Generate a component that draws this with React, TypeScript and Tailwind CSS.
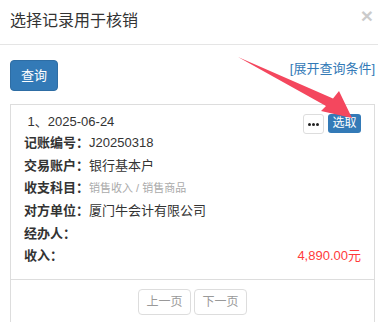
import React from "react";

const font = { fontFamily: '"Liberation Sans", "Noto Sans CJK SC", sans-serif' };

function Row({ label, children }: { label: string; children?: React.ReactNode }) {
  return (
    <div className="flex items-center h-[22.6px] text-[13px] leading-[22px] text-[#333]">
      <span className="font-bold whitespace-nowrap">{label}</span>
      <div className="flex-1 flex items-center min-w-0">{children}</div>
    </div>
  );
}

export default function App() {
  return (
    <div className="relative w-[378px] h-[322px] overflow-hidden bg-white" style={font}>
      {/* header */}
      <div className="h-[45px] border-b border-[#e5e5e5] flex items-center justify-between pl-[10px] pr-[5px]">
        <span className="text-[16px] text-[#333] leading-[22px] -mt-[3px]">选择记录用于核销</span>
        <span className="text-[21px] font-bold text-black opacity-20 leading-none -mt-[14px]">×</span>
      </div>
      {/* body */}
      <div className="pl-[10px] pr-[3px] pt-[15px]">
        <div className="flex justify-between items-start">
          <button className="w-[48px] h-[31px] rounded-[4px] bg-[#337ab7] text-white text-[13px] border border-[#2e6da4]">
            查询
          </button>
          <span className="text-[13px] leading-[20px] text-[#337ab7] -mt-[1px]">[展开查询条件]</span>
        </div>
        <div className="mt-[13px] border border-[#ddd] border-b-0">
          <div className="px-[13px] pt-[7px] pb-[11px]">
            <div className="flex justify-between items-start h-[20px]">
              <span className="text-[13px] leading-[20px] text-[#333] whitespace-pre"> 1、2025-06-24</span>
              <div className="flex gap-[4px] mt-[2px]">
                <button className="w-[21px] h-[20px] rounded-[3px] border border-[#ddd] bg-white flex items-center justify-center gap-[1px]">
                  <span className="w-[3px] h-[3px] bg-[#222] rounded-full" />
                  <span className="w-[3px] h-[3px] bg-[#222] rounded-full" />
                  <span className="w-[3px] h-[3px] bg-[#222] rounded-full" />
                </button>
                <button className="w-[33px] h-[19px] rounded-[3px] bg-[#337ab7] text-white text-[12px] leading-[19px]">
                  选取
                </button>
              </div>
            </div>
            <Row label="记账编号：">J20250318</Row>
            <Row label="交易账户：">银行基本户</Row>
            <Row label="收支科目：">
              <span className="text-[11px] text-[#aaa]">销售收入 / 销售商品</span>
            </Row>
            <Row label="对方单位：">厦门牛会计有限公司</Row>
            <Row label="经办人：" />
            <Row label="收入：">
              <span className="ml-auto text-[#ff3b3b]">4,890.00元</span>
            </Row>
          </div>
          <div className="border-t border-[#ddd] pt-[9px] h-[60px] flex justify-center gap-[3px]">
            <button className="w-[53px] h-[26px] rounded-[4px] border border-[#ddd] bg-white text-[12px] text-[#999]">
              上一页
            </button>
            <button className="w-[53px] h-[26px] rounded-[4px] border border-[#ddd] bg-white text-[12px] text-[#999]">
              下一页
            </button>
          </div>
        </div>
      </div>
      {/* annotation arrow */}
      <svg className="absolute left-0 top-0 pointer-events-none" width="378" height="322" viewBox="0 0 378 322">
        <polygon
          points="238,57 333,98.5 339,91 352,118 321,111 326,106"
          fill="#f4475e"
        />
      </svg>
    </div>
  );
}
